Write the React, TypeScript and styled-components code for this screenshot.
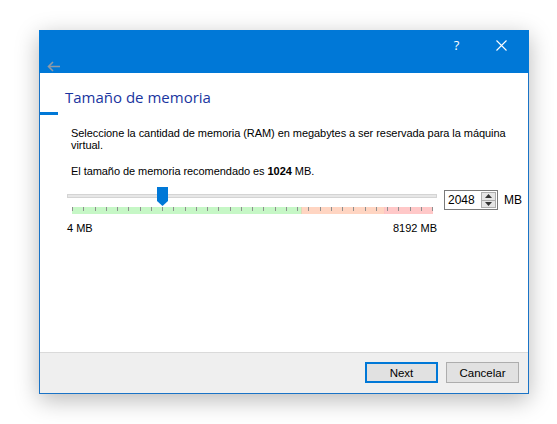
import React from "react";
import styled, { createGlobalStyle } from "styled-components";

const GlobalStyle = createGlobalStyle`
  html, body {
    margin: 0;
    padding: 0;
    background: #ffffff;
  }
  * {
    box-sizing: border-box;
  }
`;

const Page = styled.div`
  width: 557px;
  height: 424px;
  padding: 30px 0 0 39px;
  font-family: "Liberation Sans", Arial, sans-serif;
  font-size: 11px;
  color: #000;
`;

const Window = styled.div`
  width: 490px;
  height: 364px;
  display: flex;
  flex-direction: column;
  border: 1px solid #1a73c6;
  border-top: none;
  background: #ffffff;
  box-shadow: 0 6px 22px rgba(0, 0, 0, 0.28);
`;

const Header = styled.div`
  height: 43px;
  background: #0078d7;
  display: flex;
  flex-direction: column;
  margin: 0 -1px;
`;

const CaptionRow = styled.div`
  height: 30px;
  display: flex;
  justify-content: flex-end;
  padding-right: 5px;
`;

const CaptionButton = styled.div`
  width: 45px;
  height: 30px;
  display: flex;
  align-items: center;
  justify-content: center;
  color: #ffffff;
  font-family: "Open Sans", "Liberation Sans", sans-serif;
  font-size: 13px;
`;

const BackRow = styled.div`
  flex: 1;
  display: flex;
  align-items: center;
  padding-left: 8px;
`;

const Content = styled.div`
  flex: 1;
  display: flex;
  flex-direction: column;
  padding-top: 14px;
`;

const Title = styled.div`
  font-family: "Open Sans", "Noto Sans", sans-serif;
  font-size: 15px;
  line-height: 20px;
  color: #1a35a0;
  padding-left: 25px;
`;

const Accent = styled.div`
  width: 18px;
  height: 3px;
  margin-top: 5px;
  background: #0078d7;
`;

const Body = styled.div`
  display: flex;
  flex-direction: column;
  padding-left: 27px;
`;

const Paragraph = styled.p<{ $gap: number }>`
  margin: ${({ $gap }) => $gap}px 0 0 4px;
  width: 450px;
  line-height: 12px;
  letter-spacing: -0.06px;
`;

const SliderRow = styled.div`
  display: flex;
  align-items: flex-start;
  margin-top: 10px;
`;

const SliderColumn = styled.div`
  width: 370px;
  display: flex;
  flex-direction: column;
`;

const TrackArea = styled.div`
  position: relative;
  height: 20px;
  padding-top: 7px;
`;

const Groove = styled.div`
  height: 4px;
  background: #e7e7e7;
  border: 1px solid #d4d4d4;
`;

const Handle = styled.svg`
  position: absolute;
  top: 0;
  width: 11px;
  height: 19px;
`;

const TickBar = styled.div`
  height: 7px;
  margin: 0 4px 0 5px;
  display: flex;
  justify-content: space-between;
  background: linear-gradient(
    to right,
    #c6f7c6 0%,
    #c6f7c6 63.4%,
    #b8d8a8 63.4%,
    #ffd5c2 63.7%,
    #ffd5c2 86.3%,
    #f5a8a0 86.3%,
    #ffc8c8 86.6%,
    #ffc8c8 100%
  );
`;

const Tick = styled.span`
  width: 1px;
  height: 4px;
  background: #8e8e8e;
`;

const RangeLabels = styled.div`
  display: flex;
  justify-content: space-between;
  margin-top: 8px;
  line-height: 13px;
`;

const SpinBox = styled.div`
  width: 54px;
  height: 20px;
  margin: 3px 0 0 7px;
  display: flex;
  align-items: stretch;
  border: 1px solid #7a7a7a;
  background: #ffffff;
`;

const SpinValue = styled.div`
  flex: 1;
  display: flex;
  align-items: center;
  padding-left: 3px;
  font-size: 12px;
`;

const SpinButtons = styled.div`
  width: 15px;
  margin: 1px 1px 1px 0;
  display: flex;
  flex-direction: column;
  border: 1px solid #adadad;
  background: #e5e5e5;
`;

const SpinHalf = styled.div<{ $top?: boolean }>`
  flex: 1;
  display: flex;
  align-items: center;
  justify-content: center;
  border-bottom: ${({ $top }) => ($top ? "1px solid #adadad" : "none")};
`;

const UnitLabel = styled.div`
  margin: 6px 0 0 6px;
  font-size: 12px;
`;

const Footer = styled.div`
  height: 41px;
  border-top: 1px solid #dadada;
  background: #efefef;
  display: flex;
  justify-content: flex-end;
  align-items: flex-start;
  gap: 8px;
  padding: 9px 9px 0 0;
`;

const Button = styled.button<{ $default?: boolean }>`
  width: 73px;
  height: 21px;
  padding: 0;
  font-family: "Liberation Sans", Arial, sans-serif;
  font-size: 11.5px;
  color: #000;
  background: #e1e1e1;
  border: ${({ $default }) =>
    $default ? "2px solid #0078d7" : "1px solid #adadad"};
`;

const MAX_MB = 8192;
const VALUE_MB = 2048;

const App = () => {
  const ratio = VALUE_MB / MAX_MB;
  const ticks = Array.from({ length: 33 }, (_, i) => i);

  return (
    <Page>
      <GlobalStyle />
      <Window>
        <Header>
          <CaptionRow>
            <CaptionButton>?</CaptionButton>
            <CaptionButton>
              <svg width="11" height="11" viewBox="0 0 11 11">
                <path d="M0.5 0.5 L10.5 10.5 M10.5 0.5 L0.5 10.5" stroke="#ffffff" strokeWidth="1.1" />
              </svg>
            </CaptionButton>
          </CaptionRow>
          <BackRow>
            <svg width="14" height="11" viewBox="0 0 14 11">
              <path d="M13 5.5 H1.5 M6 1 L1.5 5.5 L6 10" stroke="#8f9aa6" strokeWidth="1.6" fill="none" />
            </svg>
          </BackRow>
        </Header>
        <Content>
          <Title>Tamaño de memoria</Title>
          <Accent />
          <Body>
            <Paragraph $gap={12}>
              Seleccione la cantidad de memoria (RAM) en megabytes a ser reservada para la máquina virtual.
            </Paragraph>
            <Paragraph $gap={14}>
              El tamaño de memoria recomendado es <b>1024</b> MB.
            </Paragraph>
            <SliderRow>
              <SliderColumn>
                <TrackArea>
                  <Groove />
                  <Handle
                    viewBox="0 0 11 19"
                    style={{ left: `${5 + ratio * 361 - 5.5}px` }}
                  >
                    <path d="M0 0 H11 V14 L5.5 19 L0 14 Z" fill="#0078d7" />
                  </Handle>
                </TrackArea>
                <TickBar>
                  {ticks.map((t) => (
                    <Tick key={t} />
                  ))}
                </TickBar>
                <RangeLabels>
                  <span>4 MB</span>
                  <span>8192 MB</span>
                </RangeLabels>
              </SliderColumn>
              <SpinBox>
                <SpinValue>{VALUE_MB}</SpinValue>
                <SpinButtons>
                  <SpinHalf $top>
                    <svg width="7" height="4" viewBox="0 0 7 4">
                      <path d="M0 4 L3.5 0 L7 4 Z" fill="#333" />
                    </svg>
                  </SpinHalf>
                  <SpinHalf>
                    <svg width="7" height="4" viewBox="0 0 7 4">
                      <path d="M0 0 L3.5 4 L7 0 Z" fill="#333" />
                    </svg>
                  </SpinHalf>
                </SpinButtons>
              </SpinBox>
              <UnitLabel>MB</UnitLabel>
            </SliderRow>
          </Body>
        </Content>
        <Footer>
          <Button $default>Next</Button>
          <Button>Cancelar</Button>
        </Footer>
      </Window>
    </Page>
  );
};

export default App;
